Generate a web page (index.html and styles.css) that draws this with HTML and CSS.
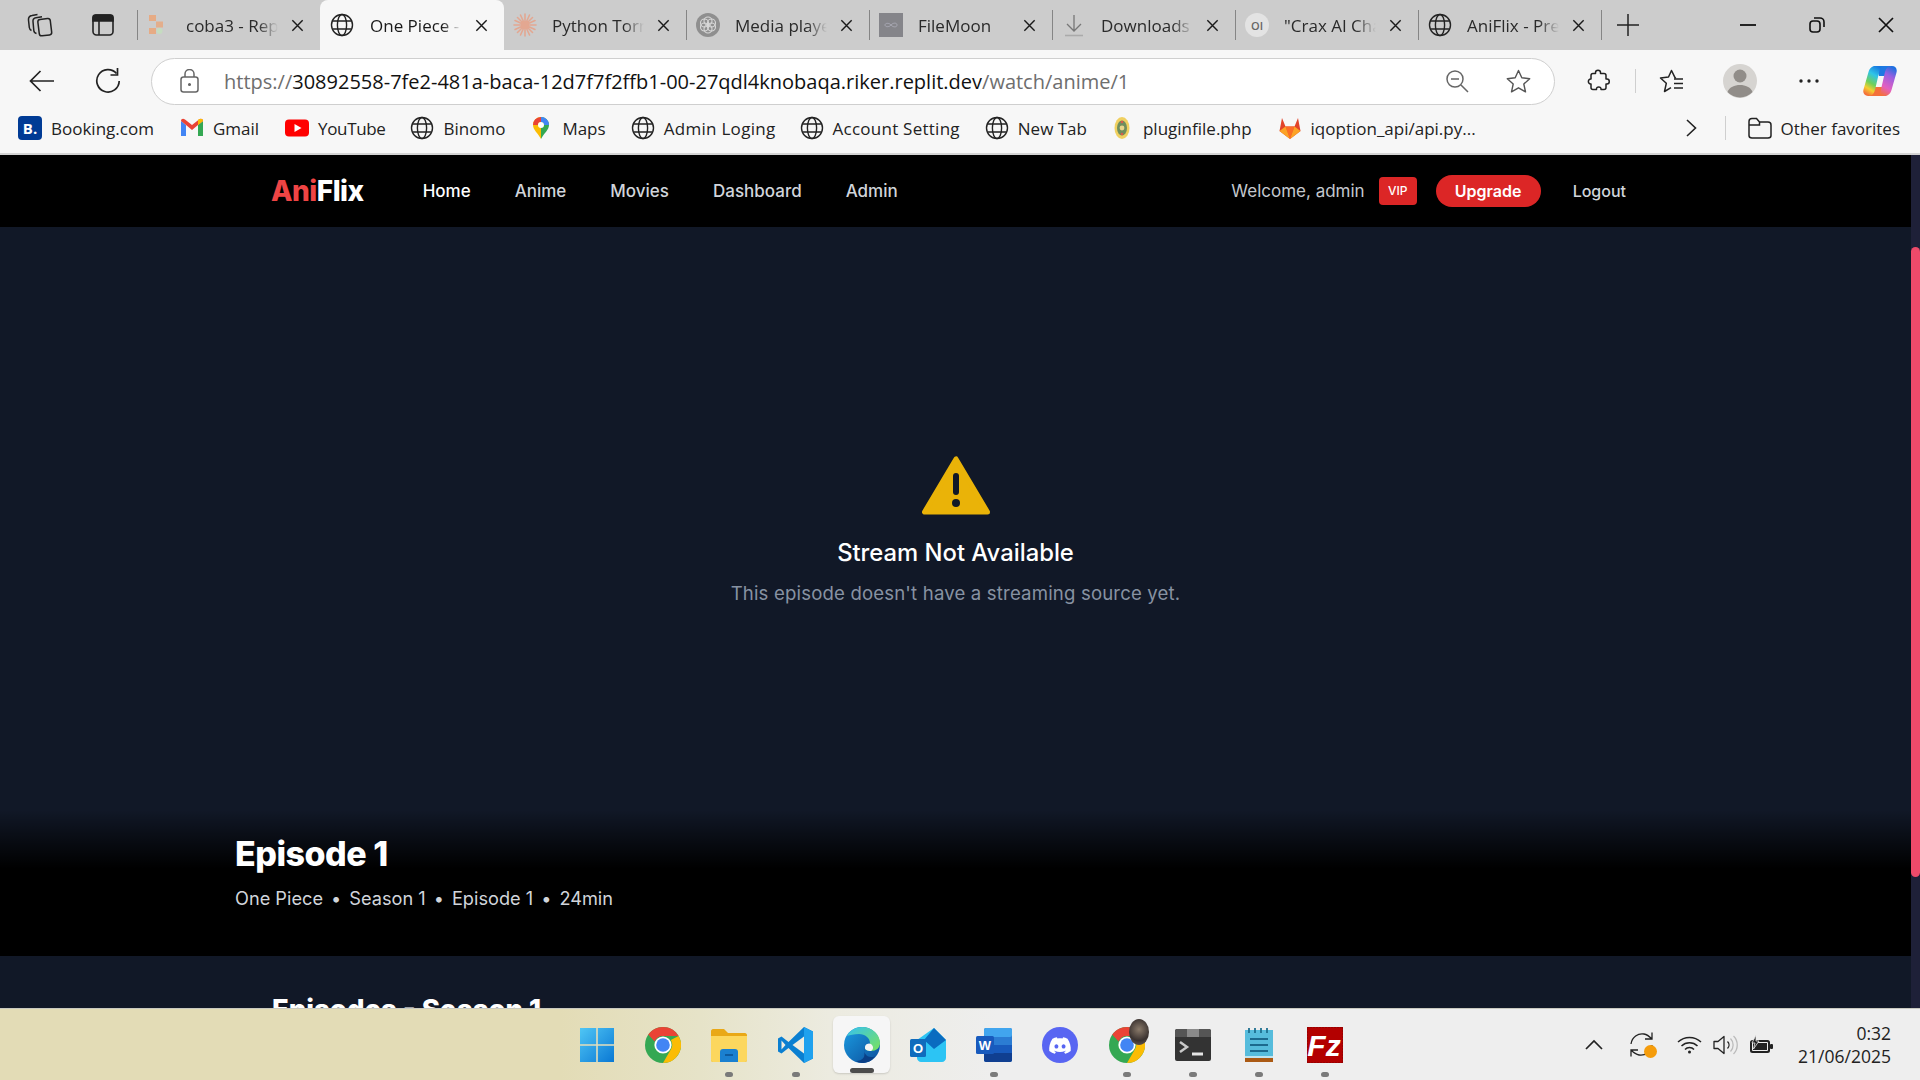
FILE: index.html
```html
<!DOCTYPE html>
<html lang="en">
<head>
    <meta charset="UTF-8">
    <meta name="viewport" content="width=device-width, initial-scale=1.0">
    <title>One Piece - AniFlix</title>
    <link rel="stylesheet" href="styles.css">
</head>
<body>
    <svg class="defs" width="0" height="0">
        <symbol id="globe" viewBox="0 0 24 24">
            <g fill="none" stroke="currentColor" stroke-width="1.4">
                <circle cx="12" cy="12" r="10.5"/>
                <ellipse cx="12" cy="12" rx="4.6" ry="10.5"/>
                <path d="M2.4 8h19.2M2.4 16h19.2"/>
            </g>
        </symbol>
        <symbol id="close" viewBox="0 0 16 16">
            <path d="M2.5 2.5l11 11M13.5 2.5l-11 11" fill="none" stroke="currentColor" stroke-width="1.5"/>
        </symbol>
        <symbol id="chrome" viewBox="0 0 36 36">
            <circle cx="18" cy="18" r="18" fill="#34a853"/>
            <path d="M18 0a18 18 0 0 1 15.6 9H18a9 9 0 0 0-8.4 5.6L3.2 7.6A18 18 0 0 1 18 0z" fill="#ea4335"/>
            <path d="M33.6 9A18 18 0 0 1 18 36l7.8-13.5A9 9 0 0 0 25.8 13z" fill="#fbbc04"/>
            <circle cx="18" cy="18" r="8.6" fill="#fff"/>
            <circle cx="18" cy="18" r="6.8" fill="#4285f4"/>
        </symbol>
    </svg>

    <header class="browser">
        <div class="tabstrip">
            <div class="strip-btn first">
                <svg width="26" height="26" viewBox="0 0 26 26" fill="none" stroke="#222" stroke-width="1.5"><rect x="11.500" y="7" width="12.500" height="16.500" rx="2.500" transform="rotate(-7 17 15)"/><path d="M9.500 21.500c-1.500-.3-2.500-1.300-2.700-3L6 9.500C5.800 7.500 7 6 9 5.700L15 4.800"/><path d="M4.500 18.500c-1.300-.6-2-1.500-2.200-3L1.500 8C1.300 5.500 2.500 3.700 5 3.400L10.500 2.500"/></svg>
            </div>
            <div class="strip-btn second">
                <svg width="22" height="22" viewBox="0 0 22 22" fill="none" stroke="#222" stroke-width="1.6"><rect x="1" y="1" width="20" height="20" rx="3.500"/><path d="M1 3.500c0-1.400 1-2.500 2.500-2.500h15C20 1 21 2.100 21 3.500V7H1z" fill="#222"/><path d="M7 7v14"/></svg>
            </div>
            <i class="tab-sep"></i>
            <div class="tab">
                <svg class="tab-icon" viewBox="0 0 24 24"><rect x="2" y="2" width="7" height="6" fill="#e6ab85"/><rect x="9" y="8.500" width="7" height="6" fill="#e6ab85" opacity=".9"/><rect x="2" y="15" width="7" height="6" fill="#e6ab85"/><circle cx="12.500" cy="18" r="3" fill="#c5dcc0"/></svg>
                <span class="tab-title">coba3 - Replit</span>
                <svg class="tab-close"><use href="#close"/></svg>
            </div>
            <div class="tab active">
                <svg class="tab-icon"><use href="#globe"/></svg>
                <span class="tab-title">One Piece - Episode 1</span>
                <svg class="tab-close"><use href="#close"/></svg>
            </div>
            <div class="tab">
                <svg class="tab-icon" viewBox="0 0 24 24"><g stroke="#e3a791" stroke-width="1.600" stroke-linecap="round"><path d="M12 1v22M1 12h22M4.500 4.500l15 15M19.500 4.500l-15 15M7.500 2l9 20M16.500 2l-9 20M2 7.500l20 9M22 7.500l-20 9"/></g></svg>
                <span class="tab-title">Python Tornado Web</span>
                <svg class="tab-close"><use href="#close"/></svg>
            </div>
            <i class="tab-sep"></i>
            <div class="tab">
                <svg class="tab-icon" viewBox="0 0 24 24"><circle cx="12" cy="12" r="12" fill="#8f8f8f"/><g fill="none" stroke="#d8d8d8" stroke-width="1.100"><circle cx="12" cy="8" r="4"/><circle cx="8.500" cy="10" r="4"/><circle cx="8.500" cy="14" r="4"/><circle cx="12" cy="16" r="4"/><circle cx="15.500" cy="14" r="4"/><circle cx="15.500" cy="10" r="4"/></g></svg>
                <span class="tab-title">Media player online</span>
                <svg class="tab-close"><use href="#close"/></svg>
            </div>
            <i class="tab-sep"></i>
            <div class="tab">
                <svg class="tab-icon" viewBox="0 0 24 24"><rect x="0" y="0" width="24" height="32" fill="#85858a" transform="scale(1 .75)"/><path d="M12 12c-2-2.500-6-2-6 0s4 2.500 6 0 6-2.500 6 0-4 2.500-6 0z" fill="none" stroke="#a9a9b4" stroke-width="1"/></svg>
                <span class="tab-title">FileMoon</span>
                <svg class="tab-close"><use href="#close"/></svg>
            </div>
            <i class="tab-sep"></i>
            <div class="tab">
                <svg class="tab-icon" viewBox="0 0 24 24" fill="none" stroke="#777" stroke-width="1.300"><path d="M12 2v16M5 11l7 7 7-7"/><path d="M3 22.500h18" stroke="#aaa" stroke-width="1.600"/></svg>
                <span class="tab-title">Downloads</span>
                <svg class="tab-close"><use href="#close"/></svg>
            </div>
            <i class="tab-sep"></i>
            <div class="tab">
                <span class="tab-icon oi">OI</span>
                <span class="tab-title">"Crax AI Chat" - Open</span>
                <svg class="tab-close"><use href="#close"/></svg>
            </div>
            <i class="tab-sep"></i>
            <div class="tab">
                <svg class="tab-icon"><use href="#globe"/></svg>
                <span class="tab-title">AniFlix - Premium Anime</span>
                <svg class="tab-close"><use href="#close"/></svg>
            </div>
            <i class="tab-sep"></i>
            <svg class="new-tab" width="22" height="22" viewBox="0 0 22 22"><path d="M11 0v22M0 11h22" stroke="#222" stroke-width="1.500"/></svg>
            <div class="win-controls">
                <svg width="16" height="16" viewBox="0 0 16 16"><path d="M0 8h16" stroke="#111" stroke-width="1.800"/></svg>
                <svg width="16" height="16" viewBox="0 0 16 16" fill="none" stroke="#111" stroke-width="1.600"><rect x="1" y="4" width="10" height="11" rx="3"/><path d="M5 1h6a4 4 0 0 1 4 4v5"/></svg>
                <svg width="16" height="16" viewBox="0 0 16 16"><path d="M1 1l14 14M15 1L1 15" stroke="#111" stroke-width="1.700"/></svg>
            </div>
        </div>

        <div class="toolbar">
            <svg class="tool-back" width="26" height="22" viewBox="0 0 26 22" fill="none" stroke="#222" stroke-width="1.700"><path d="M25 11H2M11.500 1L1.500 11l10 10"/></svg>
            <svg class="tool-reload" width="26" height="26" viewBox="0 0 26 26" fill="none" stroke="#222" stroke-width="1.700"><path d="M21.500 5.500A11.200 11.200 0 1 0 24.200 13"/><path d="M22.500 0v7h-7"/></svg>
            <div class="urlbar">
                <svg class="lock" width="19" height="24" viewBox="0 0 19 24" fill="none" stroke="#666" stroke-width="1.500"><rect x="1" y="8" width="17" height="15" rx="2.500"/><path d="M5 8V5a4.500 4.500 0 0 1 9 0v3"/><circle cx="9.500" cy="15.500" r=".8" fill="#666"/></svg>
                <span class="url"><span class="dim">https://</span>30892558-7fe2-481a-baca-12d7f7f2ffb1-00-27qdl4knobaqa.riker.replit.dev<span class="dim">/watch/anime/1</span></span>
                <svg class="url-zoom" width="23" height="23" viewBox="0 0 23 23" fill="none" stroke="#666" stroke-width="1.500"><circle cx="9" cy="9" r="8"/><path d="M5 9h8M15 15l7 7"/></svg>
                <svg class="url-star" width="25" height="25" viewBox="0 0 25 25" fill="none" stroke="#555" stroke-width="1.400"><path d="M12.500 1.500l3.300 7.300 7.900.9-5.900 5.300 1.700 7.800-7-4-7 4 1.700-7.800L1.300 9.700l7.900-.9z" stroke-linejoin="round"/></svg>
            </div>
            <svg class="tool-ext" width="24" height="24" viewBox="0 0 24 24" fill="none" stroke="#222" stroke-width="1.500" stroke-linejoin="round"><path d="M9.500 3.500c0-3 5-3 5 0v1H18c1 0 2 1 2 2V10h1c3 0 3 5 0 5h-1v3.500c0 1-1 2-2 2h-3c.5-3.500-5-3.500-4.500 0H7c-1 0-2-1-2-2V15c-3.500.5-3.500-5.500 0-5V6.500c0-1 1-2 2-2h2.500z"/></svg>
            <i class="tool-sep"></i>
            <svg class="tool-fav" width="25" height="24" viewBox="0 0 25 24" fill="none" stroke="#222" stroke-width="1.500"><path d="M17 9l-1-.3L12.500 1.500 9.500 8 1.500 9l5.800 5.300L5.500 22.500l6.500-3.800" stroke-linejoin="round"/><path d="M15 10h9M15 14.500h9M15 19h9"/></svg>
            <div class="avatar">
                <svg width="34" height="34" viewBox="0 0 34 34"><circle cx="17" cy="17" r="17" fill="#d6d4d1"/><circle cx="17" cy="12" r="6.500" fill="#918d89"/><path d="M4.500 28c2-5 7-7 12.500-7s10.500 2 12.500 7a17 17 0 0 1-25 0z" fill="#918d89"/></svg>
            </div>
            <svg class="tool-more" width="20" height="4" viewBox="0 0 20 4" fill="#222"><circle cx="2" cy="2" r="1.700"/><circle cx="10" cy="2" r="1.700"/><circle cx="18" cy="2" r="1.700"/></svg>
            <svg class="tool-copilot" width="34" height="32" viewBox="0 0 34 32">
                <defs>
                    <linearGradient id="copA" x1="0.700" y1="0" x2="0.300" y2="1"><stop offset="0" stop-color="#1778e0"/><stop offset=".3" stop-color="#2fc4e8"/><stop offset=".6" stop-color="#6fd05a"/><stop offset=".8" stop-color="#f6cf30"/><stop offset="1" stop-color="#f4703a"/></linearGradient>
                    <linearGradient id="copB" x1="0.700" y1="0" x2="0.300" y2="1"><stop offset="0" stop-color="#f4703a"/><stop offset=".3" stop-color="#e35fc0"/><stop offset=".7" stop-color="#9a5fe0"/><stop offset="1" stop-color="#1e70e0"/></linearGradient>
                </defs>
                <path d="M13 1h15l-5 10h-7zM6 31h15l-2-9h-7z" fill="#1f78e2"/>
                <path d="M6 31h15l-2-9h-7z" fill="#f4703a"/>
                <path d="M12 1h8c-2 1-3 3-3.600 5L12 25c-.8 3-3 6-6 6H5c-3.500 0-5.500-3-4.500-6.500L5.500 7C6.500 3.500 9 1 12 1z" fill="url(#copA)"/>
                <path d="M12 1h8c-2 1-3 3-3.600 5L12 25c-.8 3-3 6-6 6H5c-3.500 0-5.500-3-4.500-6.500L5.500 7C6.500 3.500 9 1 12 1z" fill="url(#copB)" transform="rotate(180 17 16)"/>
            </svg>
        </div>

        <div class="bookmarks">
            <div class="bm"><span class="bm-icon booking">B.</span><span>Booking.com</span></div>
            <div class="bm">
                <svg class="bm-icon" viewBox="0 0 24 24"><path d="M1 5v15h5V9z" fill="#4285f4"/><path d="M23 5v15h-5V9z" fill="#34a853"/><path d="M1 5c0-2 2-3 4-1.500L12 9l7-5.500C21 2 23 3 23 5l-5 4-6 5-6-5z" fill="#ea4335"/><path d="M18 9V3.500L19 3.500C21 2 23 3 23 5z" fill="#fbbc04"/></svg>
                <span>Gmail</span>
            </div>
            <div class="bm">
                <svg class="bm-icon" viewBox="0 0 24 24"><rect y="3.500" width="24" height="17" rx="4" fill="#f00"/><path d="M9.500 8l7 4-7 4z" fill="#fff"/></svg>
                <span>YouTube</span>
            </div>
            <div class="bm"><svg class="bm-icon"><use href="#globe"/></svg><span>Binomo</span></div>
            <div class="bm">
                <svg class="bm-icon" viewBox="0 0 24 24"><path d="M12 1a8 8 0 0 0-8 8c0 5 5 8 8 14z" fill="#fbbc04"/><path d="M12 1a8 8 0 0 1 8 8c0 5-5 8-8 14z" fill="#34a853"/><path d="M6 3.500a8 8 0 0 1 6-2.500v5a3 3 0 0 0-3 3H4a8 8 0 0 1 2-5.500z" fill="#ea4335"/><path d="M12 1a8 8 0 0 1 8 8h-5a3 3 0 0 0-3-3z" fill="#4285f4"/><circle cx="12" cy="9" r="3" fill="#fff"/></svg>
                <span>Maps</span>
            </div>
            <div class="bm"><svg class="bm-icon"><use href="#globe"/></svg><span>Admin Loging</span></div>
            <div class="bm"><svg class="bm-icon"><use href="#globe"/></svg><span>Account Setting</span></div>
            <div class="bm"><svg class="bm-icon"><use href="#globe"/></svg><span>New Tab</span></div>
            <div class="bm">
                <svg class="bm-icon" viewBox="0 0 24 24"><ellipse cx="12" cy="12" rx="7.500" ry="11" fill="#f0d060"/><ellipse cx="12" cy="12" rx="5" ry="7.500" fill="#6f8e5e"/><circle cx="12" cy="12" r="2.400" fill="#e8d48a"/><circle cx="12" cy="6" r="1.300" fill="#d85a4a"/><circle cx="12" cy="18" r="1.300" fill="#d85a4a"/></svg>
                <span>pluginfile.php</span>
            </div>
            <div class="bm">
                <svg class="bm-icon" viewBox="0 0 24 24"><path d="M12 23L1.500 15l2.500-13 3.500 8.500h9L20 2l2.500 13z" fill="#e24329"/><path d="M12 23l-4.500-12.500h9z" fill="#fc6d26"/><path d="M1.500 15L12 23 7.500 10.500z" fill="#fca326"/><path d="M22.500 15L12 23l4.500-12.500z" fill="#fca326"/></svg>
                <span>iqoption_api/api.py...</span>
            </div>
            <svg class="bm-more" width="11" height="18" viewBox="0 0 11 18" fill="none" stroke="#222" stroke-width="1.600"><path d="M1 1l8.500 8L1 17"/></svg>
            <i class="bm-sep"></i>
            <div class="bm other">
                <svg class="bm-icon folder" viewBox="0 0 24 22" fill="none" stroke="#222" stroke-width="1.500"><path d="M1 4.500C1 2.500 2 1.500 4 1.500h4.500l3 3.500H20c2 0 3 1 3 3v10.500c0 1.500-1 2.500-3 2.500H4c-2 0-3-1-3-2.500z M1 8h10.500l0-3"/></svg>
                <span>Other favorites</span>
            </div>
        </div>
    </header>

    <div class="viewport">
        <div class="page">
            <nav class="navbar">
                <a class="logo"><span class="logo-red">Ani</span>Flix</a>
                <div class="nav-links">
                    <a class="current">Home</a>
                    <a>Anime</a>
                    <a>Movies</a>
                    <a>Dashboard</a>
                    <a>Admin</a>
                </div>
                <div class="nav-user">
                    <span class="welcome">Welcome, admin</span>
                    <span class="vip">VIP</span>
                    <a class="upgrade">Upgrade</a>
                    <a class="logout">Logout</a>
                </div>
            </nav>

            <section class="player">
                <div class="stage">
                    <svg class="warn" width="68" height="60" viewBox="0 0 68 60">
                        <path d="M34 3L2.500 56h63z" fill="#eab308" stroke="#eab308" stroke-width="5" stroke-linejoin="round"/>
                        <rect x="31" y="17" width="6" height="22" rx="3" fill="#111827"/>
                        <circle cx="34" cy="47" r="4" fill="#111827"/>
                    </svg>
                    <h3>Stream Not Available</h3>
                    <p>This episode doesn't have a streaming source yet.</p>
                </div>
                <div class="ep-info">
                    <h1>Episode 1</h1>
                    <div class="ep-meta">
                        <span>One Piece</span><span>•</span><span>Season 1</span><span>•</span><span>Episode 1</span><span>•</span><span>24min</span>
                    </div>
                </div>
            </section>

            <section class="episodes">
                <h2>Episodes - Season 1</h2>
            </section>
        </div>
        <div class="scrollbar"><div class="thumb"></div></div>
    </div>

    <footer class="taskbar">
        <div class="task-icons">
            <div class="task">
                <svg width="36" height="36" viewBox="0 0 36 36">
                    <defs><linearGradient id="winG" x1="0" y1="0" x2="1" y2="1"><stop offset="0" stop-color="#4fc6f5"/><stop offset="1" stop-color="#0a78d4"/></linearGradient></defs>
                    <path d="M1 1h16.200v16.200H1zM18.800 1H35v16.200H18.800zM1 18.800h16.200V35H1zM18.800 18.800H35V35H18.800z" fill="url(#winG)"/>
                </svg>
            </div>
            <div class="task"><svg width="36" height="36"><use href="#chrome"/></svg></div>
            <div class="task open">
                <svg width="36" height="36" viewBox="0 0 36 36"><path d="M0 4c0-1 1-2 2-2h11l4 4h17c1 0 2 1 2 2v25c0 1-1 2-2 2H2c-1 0-2-1-2-2z" fill="#e9a817"/><path d="M0 9h36v24c0 1-1 2-2 2H2c-1 0-2-1-2-2z" fill="#fcd75e"/><path d="M9 25c0-2 1-3 3-3h12c2 0 3 1 3 3v10H9z" fill="#1a80d0"/><path d="M14 28h8" stroke="#0b4f8f" stroke-width="1.500"/></svg>
            </div>
            <div class="task open">
                <svg width="36" height="36" viewBox="0 0 36 36"><path d="M26 0l9 4.500v27L26 36 10.500 21 3.500 26.500 0 24.500v-13L3.500 9.500 10.500 15z" fill="#0a7fd1"/><path d="M26 0l9 4.500v27L26 36z" fill="#1fa1ee"/><path d="M26 9.500L14.500 18 26 26.500z" fill="#f0ede0"/><path d="M3.500 13.500L7.500 18l-4 4.500z" fill="#f0ede0"/></svg>
            </div>
            <div class="task active">
                <svg width="36" height="36" viewBox="0 0 36 36">
                    <defs><linearGradient id="edgeA" x1="0" y1="0" x2="1" y2="1"><stop offset="0" stop-color="#35c1f1"/><stop offset="1" stop-color="#7be35a"/></linearGradient><linearGradient id="edgeB" x1="0" y1="0" x2="1" y2="1"><stop offset="0" stop-color="#1b9de2"/><stop offset="1" stop-color="#0c4f9c"/></linearGradient></defs>
                    <circle cx="18" cy="18" r="18" fill="url(#edgeB)"/>
                    <path d="M3 9C6 3 12 0 18 0c10 0 18 7 18 16 0 5-4 8-9 8-3 0-6-1-6-3 3 0 5-2 5-5 0-5-5-9-11-9-5 0-9 1-12 2z" fill="url(#edgeA)"/>
                    <path d="M21 21c-2 4 1 9 6 9 2 0 3 0 4-1-3 5-8 7-13 7-2 0-4-1-6-2 3 0 6-1 8-4 1-3 0-6 1-9z" fill="#0a3f86"/>
                    <path d="M27 24a4 4 0 1 0-6-3c0 2 3 3 6 3z" fill="#f4f4f4"/>
                </svg>
            </div>
            <div class="task">
                <svg width="36" height="36" viewBox="0 0 36 36"><path d="M7 13L24 1l12 12v18c0 2-2 4-4 4H11c-2 0-4-2-4-4z" fill="#2cc4f4"/><path d="M14 13L24 1l12 12-12 9z" fill="#0a6cc0"/><rect y="12" width="16" height="18" rx="1.500" fill="#0f6cbd"/><text x="8" y="26" class="icon-letter" font-size="13">O</text></svg>
            </div>
            <div class="task open">
                <svg width="36" height="36" viewBox="0 0 36 36"><rect x="8" y="1" width="28" height="34" rx="2" fill="#2b7cd3"/><rect x="8" y="1" width="28" height="9" fill="#41a5ee" rx="2"/><rect x="8" y="18" width="28" height="8" fill="#185abd"/><path d="M8 26h28v7c0 1-1 2-2 2H10c-1 0-2-1-2-2z" fill="#103f91"/><rect y="9" width="18" height="18" rx="1.500" fill="#185abd"/><text x="9" y="23" class="icon-letter" font-size="13">W</text></svg>
            </div>
            <div class="task">
                <svg width="36" height="36" viewBox="0 0 36 36"><circle cx="18" cy="18" r="18" fill="#5865f2"/><g transform="translate(7.200 7.800) scale(.9)"><path fill="#fff" d="M20.317 4.3698a19.7913 19.7913 0 00-4.8851-1.5152.0741.0741 0 00-.0785.0371c-.211.3753-.4447.8648-.6083 1.2495-1.8447-.2762-3.68-.2762-5.4868 0-.1636-.3933-.4058-.8742-.6177-1.2495a.077.077 0 00-.0785-.037 19.7363 19.7363 0 00-4.8852 1.515.0699.0699 0 00-.0321.0277C.5334 9.0458-.319 13.5799.0992 18.0578a.0824.0824 0 00.0312.0561c2.0528 1.5076 4.0413 2.4228 5.9929 3.0294a.0777.0777 0 00.0842-.0276c.4616-.6304.8731-1.2952 1.226-1.9942a.076.076 0 00-.0416-.1057c-.6528-.2476-1.2743-.5495-1.8722-.8923a.077.077 0 01-.0076-.1277c.1258-.0943.2517-.1923.3718-.2914a.0743.0743 0 01.0776-.0105c3.9278 1.7933 8.18 1.7933 12.0614 0a.0739.0739 0 01.0785.0095c.1202.099.246.1981.3728.2924a.077.077 0 01-.0066.1276 12.2986 12.2986 0 01-1.873.8914.0766.0766 0 00-.0407.1067c.3604.698.7719 1.3628 1.225 1.9932a.076.076 0 00.0842.0286c1.961-.6067 3.9495-1.5219 6.0023-3.0294a.077.077 0 00.0313-.0552c.5004-5.177-.8382-9.6739-3.5485-13.6604a.061.061 0 00-.0312-.0286zM8.02 15.3312c-1.1825 0-2.1569-1.0857-2.1569-2.419 0-1.3332.9555-2.4189 2.157-2.4189 1.2108 0 2.1757 1.0952 2.1568 2.419 0 1.3332-.9555 2.4189-2.1569 2.4189zm7.9748 0c-1.1825 0-2.1569-1.0857-2.1569-2.419 0-1.3332.9554-2.4189 2.1569-2.4189 1.2108 0 2.1757 1.0952 2.1568 2.419 0 1.3332-.946 2.4189-2.1568 2.4189Z"/></g></svg>
            </div>
            <div class="task open">
                <svg width="36" height="36" viewBox="0 0 36 36"><use href="#chrome"/></svg>
                <span class="chrome-badge"></span>
            </div>
            <div class="task open">
                <svg width="36" height="36" viewBox="0 0 36 36"><rect y="2" width="36" height="32" rx="2" fill="#333"/><path d="M0 4c0-1 1-2 2-2h32c1 0 2 1 2 2v6H0z" fill="#555"/><rect x="12" y="2" width="12" height="8" fill="#8a8a8a"/><path d="M5 15l7 5-7 5" fill="none" stroke="#c9c9c9" stroke-width="2.500"/><path d="M17 27h11" stroke="#e4e4e4" stroke-width="3"/></svg>
            </div>
            <div class="task open">
                <svg width="36" height="36" viewBox="0 0 36 36"><rect x="4" y="3" width="28" height="30" fill="#56bcdc"/><rect x="4" y="29" width="28" height="6" fill="#ab5a14"/><rect x="4" y="29" width="28" height="2" fill="#bfe4f0"/><path d="M8 1v5M14 1v5M20 1v5M26 1v5" stroke="#1e6f8f" stroke-width="1.800"/><path d="M9 12h18M9 18h18M9 24h18" stroke="#1c6a8e" stroke-width="2"/></svg>
            </div>
            <div class="task open">
                <svg width="36" height="36" viewBox="0 0 36 36"><rect width="36" height="36" fill="#b30000" stroke="#7d0000" stroke-dasharray="2 1"/><text x="17" y="29" class="fz" font-size="30">Fz</text></svg>
            </div>
        </div>
        <div class="tray">
            <svg class="tray-chev" width="18" height="11" viewBox="0 0 18 11" fill="none" stroke="#222" stroke-width="1.700"><path d="M1 10l8-8 8 8"/></svg>
            <div class="tray-sync">
                <svg width="24" height="25" viewBox="0 0 24 25" fill="none" stroke="#222" stroke-width="1.300"><path d="M1 12C2 5 8 1 14 2c3 .5 5 2 8 5M22 .5V7h-7"/><path d="M22 13c-1 7-7 11-13 10-3-.5-5-2-8-5M1 24.500V18h7"/></svg>
                <i class="sync-dot"></i>
            </div>
            <svg class="tray-wifi" width="25" height="18" viewBox="0 0 25 18" fill="none" stroke="#222" stroke-width="1.500"><path d="M1 6a17 17 0 0 1 23 0M4.500 10a11.500 11.500 0 0 1 16 0M8 13.500a6 6 0 0 1 9 0"/><circle cx="12.500" cy="16" r="1.500" fill="#222" stroke="none"/></svg>
            <svg class="tray-vol" width="25" height="20" viewBox="0 0 25 20" fill="none" stroke="#222" stroke-width="1.300"><path d="M1 6.500h4L11 1.500v17l-6-5H1z" stroke-linejoin="round"/><path d="M14.500 6.500c2 2 2 5 0 7"/><path d="M17.500 3.500c3.500 3.500 3.500 9.500 0 13M20.500 1c5 5 5 13 0 18" stroke="#bbb"/></svg>
            <svg class="tray-bat" width="25" height="19" viewBox="0 0 25 19"><rect x="1" y="5" width="20" height="13" rx="2.500" fill="#222"/><rect x="3" y="7" width="16" height="9" rx="1" fill="#eee"/><rect x="4" y="8" width="14" height="7" fill="#222"/><rect x="21" y="9" width="3" height="5" rx="1" fill="#222"/><path d="M7 0L3 8h3l-1.500 6L10 6H7z" fill="#222" stroke="#eee" stroke-width=".8"/></svg>
            <div class="clock">
                <span>0:32</span>
                <span>21/06/2025</span>
            </div>
        </div>
    </footer>
</body>
</html>
```

FILE: styles.css
```css
* {
    box-sizing: border-box;
}
html, body {
    margin: 0;
    height: 100%;
    overflow: hidden;
}
body {
    display: flex;
    flex-direction: column;
    height: 1080px;
    font-family: "Open Sans", "Noto Sans", sans-serif;
    color: #1a1a1a;
    background: #111827;
}
.defs {
    position: absolute;
}

/* browser frame */
.browser {
    flex: 0 0 155px;
    background: #f7f7f7;
    border-bottom: 2px solid #d4d4d4;
}
.tabstrip {
    display: flex;
    align-items: center;
    height: 50px;
    background: #cccccc;
}
.strip-btn {
    display: flex;
    justify-content: center;
    width: 39px;
}
.strip-btn.first {
    margin-left: 20px;
}
.strip-btn.second {
    margin-left: 24px;
}
.strip-btn.second + .tab-sep {
    margin-left: 15px;
}
.tab-sep {
    flex: 0 0 1px;
    height: 30px;
    background: #858585;
}
.tab {
    display: flex;
    align-items: center;
    flex: 0 0 182px;
    height: 50px;
    padding-left: 9px;
    color: #2a2a2a;
}
.tab.active {
    flex-basis: 184px;
    padding-left: 10px;
    background: #f7f7f7;
    border-radius: 8px 8px 0 0;
    color: #1a1a1a;
}
.tab-icon {
    flex: 0 0 24px;
    width: 24px;
    height: 24px;
    color: #222;
}
.tab-icon.oi {
    display: flex;
    align-items: center;
    justify-content: center;
    border-radius: 50%;
    background: #e3e3e3;
    color: #666;
    font-size: 11px;
    font-weight: 600;
}
.tab-title {
    flex: 0 0 92px;
    margin-left: 15px;
    overflow: hidden;
    white-space: nowrap;
    font-size: 17px;
    -webkit-mask-image: linear-gradient(to right, #000 78%, transparent 100%);
    mask-image: linear-gradient(to right, #000 78%, transparent 100%);
}
.tab.active .tab-title {
    margin-left: 16px;
}
.tab-close {
    flex: 0 0 15px;
    width: 15px;
    height: 15px;
    margin-left: 12px;
    color: #1a1a1a;
}
.new-tab {
    margin-left: 15px;
}
.win-controls {
    display: flex;
    align-items: center;
    gap: 53px;
    margin-left: auto;
    margin-right: 26px;
}

.toolbar {
    display: flex;
    align-items: center;
    height: 62px;
}
.tool-back {
    margin-left: 29px;
}
.tool-reload {
    margin-left: 40px;
}
.urlbar {
    display: flex;
    align-items: center;
    flex: 0 0 1404px;
    height: 47px;
    margin-left: 30px;
    padding-left: 28px;
    background: #fff;
    border: 1.500px solid #cfcfcf;
    border-radius: 24px;
}
.url {
    margin-left: 25px;
    font-size: 20px;
    white-space: nowrap;
    color: #111;
}
.url .dim {
    color: #6e6e6e;
}
.url-zoom {
    margin-left: auto;
}
.url-star {
    margin-left: 37px;
    margin-right: 23px;
}
.tool-ext {
    margin-left: 31px;
}
.tool-sep {
    flex: 0 0 1px;
    height: 24px;
    margin-left: 25px;
    background: #cfcfcf;
}
.tool-fav {
    margin-left: 23px;
}
.avatar {
    height: 34px;
    margin-left: 39px;
}
.tool-more {
    margin-left: 42px;
}
.tool-copilot {
    margin-left: 44px;
}

.bookmarks {
    display: flex;
    align-items: center;
    height: 41px;
    padding: 0 0 9px 18px;
    font-size: 17px;
    color: #1e1e1e;
}
.bm {
    display: flex;
    align-items: center;
    gap: 9px;
    margin-right: 26px;
    white-space: nowrap;
    color: #222;
}
/* segoe runs a bit different from open sans, so the spacing is nudged per item */
.bm:nth-child(3) {
    margin-right: 25px;
    letter-spacing: -0.35px;
}
.bm:nth-child(4) {
    margin-right: 24px;
}
.bm:nth-child(5) {
    margin-right: 25px;
}
.bm:nth-child(6) {
    margin-right: 24px;
    letter-spacing: 0.3px;
}
.bm:nth-child(7) {
    margin-right: 25px;
    letter-spacing: 0.25px;
}
.bm:nth-child(8) {
    margin-right: 23px;
}
.bm-icon {
    flex: 0 0 24px;
    width: 24px;
    height: 24px;
}
.bm-icon.booking {
    display: flex;
    align-items: center;
    justify-content: center;
    border-radius: 4px;
    background: #003b95;
    color: #fff;
    font-size: 15px;
    font-weight: 700;
}
.bm-more {
    margin-left: auto;
    margin-right: 28px;
}
.bm-sep {
    flex: 0 0 1px;
    height: 24px;
    margin-right: 22px;
    background: #cfcfcf;
}
.bm.other {
    margin-right: 20px;
}

/* page inside the browser */
.viewport {
    flex: 1;
    display: flex;
    min-height: 0;
    overflow: hidden;
}
.page {
    flex: 1;
    min-width: 0;
    font-family: Inter, "Liberation Sans", sans-serif;
    color: #fff;
}
.scrollbar {
    flex: 0 0 9px;
    padding-top: 92px;
    background: #1e2038;
}
.thumb {
    height: 630px;
    border-radius: 5px;
    background: #ee4a6a;
}

.navbar {
    display: flex;
    align-items: center;
    height: 72px;
    padding: 0 285px 1px 271px;
    background: #000;
    font-size: 16px;
}
.logo {
    font-size: 28px;
    font-weight: 800;
    letter-spacing: -0.5px;
}
.logo-red {
    color: #ef4444;
}
.nav-links {
    display: flex;
    gap: 44px;
    margin-left: 59px;
    font-size: 17px;
    font-weight: 500;
    color: #d1d5db;
}
.nav-links .current {
    color: #fff;
}
.nav-user {
    display: flex;
    align-items: center;
    margin-left: auto;
}
.welcome {
    font-size: 17px;
    color: #c4c8ce;
}
.vip {
    display: flex;
    align-items: center;
    justify-content: center;
    width: 38px;
    height: 28px;
    margin-left: 14px;
    background: #dc2626;
    border-radius: 4px;
    font-size: 12px;
    font-weight: 500;
}
.upgrade {
    display: flex;
    align-items: center;
    justify-content: center;
    width: 105px;
    height: 32px;
    margin-left: 19px;
    background: #dc2626;
    border-radius: 16px;
    font-weight: 600;
}
.logout {
    margin-left: 32px;
    font-weight: 500;
    color: #d1d5db;
}

.player {
    display: flex;
    flex-direction: column;
    height: 729px;
    background: #111827;
}
.stage {
    display: flex;
    flex-direction: column;
    align-items: center;
    height: 583px;
    padding-top: 229px;
}
.warn {
    display: block;
}
.stage h3 {
    margin: 21px 0 0;
    font-size: 23.800px;
    line-height: 32px;
    font-weight: 500;
}
.stage p {
    margin: 10px 0 0;
    font-size: 18.600px;
    letter-spacing: 0.16px;
    line-height: 28px;
    color: #8792a2;
}
.ep-info {
    height: 146px;
    padding: 24px 0 0 235px;
    background: linear-gradient(to top, #000 60%, transparent);
}
.ep-info h1 {
    margin: 0;
    font-size: 34px;
    line-height: 40px;
    font-weight: 800;
    letter-spacing: -0.5px;
}
.ep-meta {
    display: flex;
    gap: 8px;
    margin-top: 10px;
    font-size: 18.200px;
    line-height: 28px;
    color: #d1d5db;
}
.episodes {
    padding: 35px 0 0 272px;
    background: #111827;
}
.episodes h2 {
    margin: 0;
    font-size: 27.500px;
    line-height: 36px;
    font-weight: 800;
}

/* windows taskbar */
.taskbar {
    position: relative;
    display: flex;
    flex: 0 0 72px;
    align-items: center;
    background: linear-gradient(to right, #e3dcb6 0, #e3dcb6 560px, #e6e3c8 700px, #ecebe0 830px, #eeeeee 1000px);
    border-top: 1px solid #c9c9c0;
}
.task-icons {
    display: flex;
    margin-left: 564px;
}
.task {
    position: relative;
    display: flex;
    align-items: center;
    justify-content: center;
    width: 66.200px;
    height: 57px;
}
.task.open::after, .task.active::after {
    content: "";
    position: absolute;
    left: 50%;
    bottom: -4px;
    width: 8px;
    height: 5px;
    margin-left: -4px;
    border-radius: 3px;
    background: #7a7a7a;
}
.task.active {
    background: #f6f6f6;
    border-radius: 6px;
    box-shadow: 0 1px 2px rgba(0,0,0,.15);
    width: 57px;
    margin: 0 4.600px;
}
.task.active::after {
    bottom: 0;
    width: 24px;
    margin-left: -12px;
    background: #4c4c4c;
}
.chrome-badge {
    position: absolute;
    top: 3px;
    left: 35px;
    width: 20px;
    height: 26px;
    border-radius: 50%;
    background: radial-gradient(circle at 50% 40%, #8a7a6a 0, #3a3230 60%, #6d625a 100%);
}
.icon-letter {
    fill: #fff;
    font-family: "Liberation Sans", sans-serif;
    font-weight: 700;
    text-anchor: middle;
}
.fz {
    fill: #fff;
    font-family: "Liberation Sans", sans-serif;
    font-weight: 700;
    font-style: italic;
    text-anchor: middle;
}
.tray {
    display: flex;
    align-items: center;
    margin-left: auto;
    margin-right: 29px;
}
.tray-sync {
    position: relative;
    height: 25px;
    margin-left: 27px;
}
.sync-dot {
    position: absolute;
    right: -3px;
    bottom: -1px;
    width: 13px;
    height: 13px;
    border-radius: 50%;
    background: #f59c0b;
}
.tray-wifi {
    margin-left: 23px;
}
.tray-vol {
    margin-left: 11px;
}
.tray-bat {
    margin-left: 11px;
}
.clock {
    display: flex;
    flex-direction: column;
    align-items: flex-end;
    margin-left: 24px;
    font-size: 17.500px;
    line-height: 23px;
    color: #222;
}
```
